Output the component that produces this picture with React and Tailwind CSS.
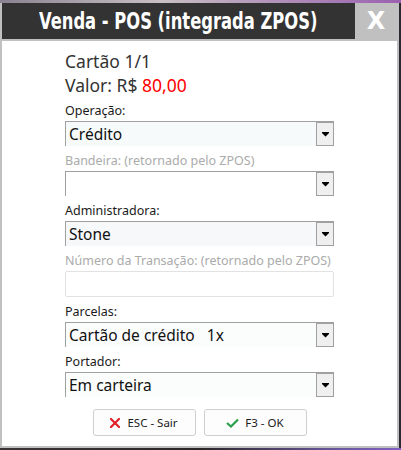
import React from "react";

function Arrow() {
  return (
    <svg width="7" height="5" viewBox="0 0 7 5" className="block">
      <rect x="0" y="0" width="7" height="1" fill="#000" />
      <polygon points="0,1 7,1 3.5,4.5" fill="#000" />
    </svg>
  );
}

function Select({ value, bg = "bg-[#f6fafb]" }) {
  return (
    <div className={`relative h-[25px] border-t border-l border-[#a0a0a0] ${bg} flex`}>
      <div className="flex-1 pl-[3px] pt-[1px] text-[15.5px] leading-[22px] text-[#111] whitespace-pre">{value}</div>
      <div className="w-[18px] h-[24px] border border-[#a0a0a0] bg-[#efefef] flex items-center justify-center">
        <Arrow />
      </div>
    </div>
  );
}

function Label({ children, disabled }) {
  return (
    <div className={`h-[18px] text-[12.5px] leading-[18px] whitespace-nowrap ${disabled ? "text-[#ababab]" : "text-[#1a1a1a]"}`}>
      {children}
    </div>
  );
}

function Field({ label, disabled, children }) {
  return (
    <div className="flex flex-col gap-[1px]">
      <Label disabled={disabled}>{label}</Label>
      {children}
    </div>
  );
}

export default function App() {
  return (
    <div
      className="w-[401px] h-[450px] flex flex-col overflow-hidden"
      style={{ fontFamily: '"Noto Sans", sans-serif' }}
    >
      <div className="h-[3px] bg-[linear-gradient(90deg,#8a8290,#c8c0c4_40%,#b090b8_70%,#9a60b0)]" />
      <div className="flex">
        <div className="w-[399px] bg-[#c0c0c0] px-[2px] flex flex-col">
          <div className="h-[36px] flex">
            <div className="flex-1 bg-[#333333] flex items-center justify-center overflow-hidden">
              <span
                className="inline-block whitespace-nowrap text-white font-bold text-[23px] leading-none scale-x-[0.79]"
                style={{ fontFamily: '"DejaVu Sans Condensed", "DejaVu Sans", sans-serif' }}
              >
                Venda - POS (integrada ZPOS)
              </span>
            </div>
            <div
              className="w-[42px] flex items-center justify-center text-white font-bold text-[24px] leading-none"
              style={{ fontFamily: '"DejaVu Sans", sans-serif' }}
            >
              X
            </div>
          </div>
          <div className="h-[2px]" />
          <div className="h-[405px] bg-white px-[63px] pt-[8px] flex flex-col">
            <div className="text-[17.5px] leading-[24px] text-[#333]">Cartão 1/1</div>
            <div className="text-[17.5px] leading-[24px] text-[#333]">
              Valor: R$ <span className="text-[#ff0000]">80,00</span>
            </div>
            <div className="mt-[5px] flex flex-col gap-[6px]">
              <Field label="Operação:">
                <Select value="Crédito" />
              </Field>
              <Field label="Bandeira: (retornado pelo ZPOS)" disabled>
                <Select value="" bg="bg-white" />
              </Field>
              <Field label="Administradora:">
                <Select value="Stone" bg="bg-[#f6f8fa]" />
              </Field>
              <Field label="Número da Transação: (retornado pelo ZPOS)" disabled>
                <div className="h-[26px] border border-[#e2e2e2] rounded-[2px] bg-white" />
              </Field>
              <Field label="Parcelas:">
                <Select value="Cartão de crédito   1x" bg="bg-[#fbfcfc]" />
              </Field>
              <Field label="Portador:">
                <Select value="Em carteira" bg="bg-[#fbfcfc]" />
              </Field>
            </div>
            <div className="mt-[12px] flex justify-center gap-[8px]">
              <button className="w-[103px] h-[27px] rounded-[3px] border border-[#cfcfcf] bg-[#fdfdfd] flex items-center justify-center gap-[7px] text-[11.5px] text-[#1a1a1a]">
                <svg width="10" height="10" viewBox="0 0 10 10">
                  <path d="M1 1 L9 9 M9 1 L1 9" stroke="#e3202a" strokeWidth="2.2" strokeLinecap="square" />
                </svg>
                ESC - Sair
              </button>
              <button className="w-[103px] h-[27px] rounded-[3px] border border-[#cfcfcf] bg-[#fdfdfd] flex items-center justify-center gap-[6px] text-[11.5px] text-[#1a1a1a]">
                <svg width="13" height="10" viewBox="0 0 13 10">
                  <path d="M1 5 L5 8.5 L12 1.5" stroke="#2aa04a" strokeWidth="2.2" fill="none" />
                </svg>
                F3 - OK
              </button>
            </div>
          </div>
          <div className="h-[2px]" />
        </div>
        <div className="flex-1 bg-[#2a2a30]" />
      </div>
      <div className="flex-1 bg-[linear-gradient(90deg,#3a3438,#2a2628_50%,#6a58a0_85%,#8060c0)]" />
    </div>
  );
}
